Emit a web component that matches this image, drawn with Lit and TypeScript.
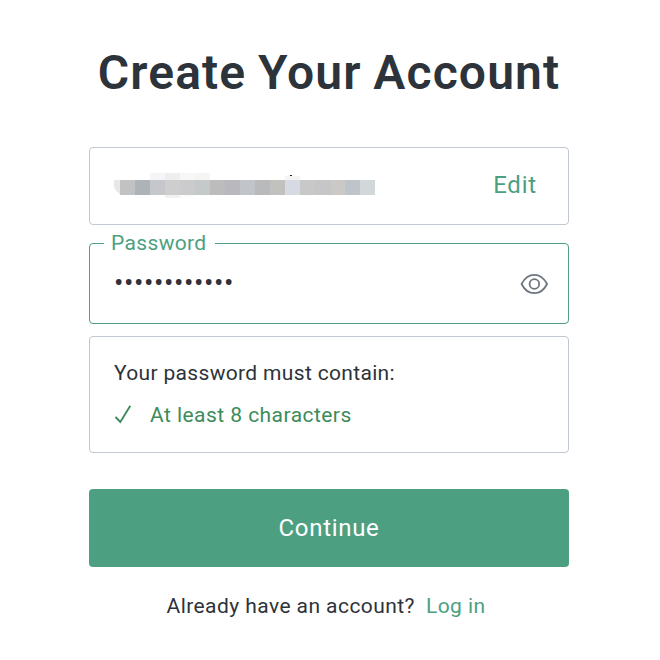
import { LitElement, html, css, svg } from "lit";
import { customElement } from "lit/decorators.js";

// [x, y, width, height, fill] blocks of the masked e-mail address
const MASK: [number, number, number, number, string][] = [
  [6, 7, 15, 15, "#c2c2c2"], [21, 7, 15, 15, "#adb3b6"], [36, 7, 15, 15, "#c6c7cc"],
  [51, 7, 15, 15, "#cecece"], [66, 7, 15, 15, "#cbcbcd"], [81, 7, 15, 15, "#c5c9c9"],
  [96, 7, 15, 15, "#bcbcbc"], [111, 7, 15, 15, "#b9b8be"], [126, 7, 15, 15, "#c1c5c9"],
  [141, 7, 15, 15, "#b9babc"], [156, 7, 15, 15, "#c1c1be"], [171, 7, 15, 15, "#d7dae3"],
  [186, 7, 15, 15, "#c8c8c8"], [201, 7, 15, 15, "#c6c6c9"], [216, 7, 15, 15, "#cbc9c8"],
  [231, 7, 15, 15, "#bec4c9"],
  [36, 0, 15, 7, "#f5f5f5"], [51, 0, 15, 7, "#eeeeee"], [66, 0, 15, 7, "#f6f7f7"],
  [81, 0, 15, 7, "#f5f5f4"], [51, 22, 15, 3, "#f2f2f3"], [66, 22, 15, 3, "#fcfcfc"],
  [171, 3, 15, 4, "#f4f4f4"], [176, 2, 2, 1, "#25243f"], [175, 2, 1, 1, "#f8dfae"],
];

@customElement("app-root")
export class AppRoot extends LitElement {
  static styles = css`
    :host {
      display: block;
      height: 660px;
      box-sizing: border-box;
      padding: 45px 91px 0 89px;
      background: #fff;
      color: #2d333a;
      font: 400 21px/28px Roboto, "Liberation Sans", sans-serif;
      white-space: nowrap;
      overflow: hidden;
    }
    .title {
      margin: 0 0 46px;
      font-size: 48px;
      line-height: 56px;
      font-weight: 600;
      text-align: center;
      letter-spacing: 1.15px;
      word-spacing: -1.5px;
    }
    .box {
      box-sizing: border-box;
      border: 1px solid #c2c8d0;
      border-radius: 4px;
    }
    .email {
      height: 78px;
      display: flex;
      justify-content: space-between;
      align-items: flex-start;
      padding: 25px 31px 0 24px;
    }
    .mask { display: block; }
    a { color: #4ca081; text-decoration: none; }
    .edit {
      font-size: 24px;
      line-height: 24px;
      letter-spacing: 0.8px;
    }
    .password {
      height: 81px;
      margin-top: 18px;
      border-color: #4ca081;
      position: relative;
      display: flex;
      justify-content: space-between;
      align-items: center;
      padding: 0 20px 0 24px;
    }
    .label {
      position: absolute;
      left: 14px;
      top: -15px;
      padding: 0 8px 0 7px;
      background: #fff;
      color: #4ca081;
      letter-spacing: 0.35px;
    }
    .dots { font-size: 28px; letter-spacing: 0.55px; padding-bottom: 2px; }
    .eye, .tick { display: block; fill: none; }
    .rules {
      height: 117px;
      margin-top: 12px;
      padding: 22px 24px 0;
    }
    .intro { letter-spacing: 0.33px; }
    .rule {
      display: flex;
      align-items: center;
      gap: 18px;
      margin-top: 14px;
      color: #3d8b5a;
      letter-spacing: 0.45px;
    }
    .continue {
      display: block;
      width: 100%;
      height: 78px;
      margin-top: 36px;
      padding: 0;
      border: 0;
      border-radius: 4px;
      background: #4ca081;
      color: #fff;
      font: 440 24px/28px Roboto, "Liberation Sans", sans-serif;
      letter-spacing: 0.7px;
    }
    .footer {
      display: flex;
      justify-content: center;
      gap: 11px;
      margin-top: 25px;
      padding-right: 6px;
      letter-spacing: 0.43px;
    }
  `;

  render() {
    return html`
      <h1 class="title">Create Your Account</h1>
      <div class="box email">
        <svg class="mask" width="261" height="25" viewBox="0 0 261 25" shape-rendering="crispEdges">
          <path d="M0 7h6v15L2 18L0 14z" fill="#e8e8e6" />
          <path d="M246 7h14l1 1v14h-15z" fill="#d2d7da" />
          ${MASK.map(([x, y, w, h, fill]) => svg`<rect x=${x} y=${y} width=${w} height=${h} fill=${fill} />`)}
        </svg>
        <a class="edit">Edit</a>
      </div>
      <div class="box password">
        <span class="label">Password</span>
        <span class="dots">••••••••••••</span>
        <svg class="eye" width="28" height="22" viewBox="0 0 28 22" stroke="#6e7780" stroke-width="1.8">
          <path d="M1.6 11C4.5 5 8.8 1.8 14.4 1.8S24 5 27.1 11C24 17 19.6 20.2 14.4 20.2S4.5 17 1.6 11z" stroke-linejoin="round" />
          <circle cx="14.4" cy="11" r="4.8" />
        </svg>
      </div>
      <div class="box rules">
        <div class="intro">Your password must contain:</div>
        <div class="rule">
          <svg class="tick" width="18" height="20" viewBox="0 0 18 20" stroke="#3d8b5a" stroke-width="1.9">
            <path d="M1.5 12L6.3 17L16.3 0.8" />
          </svg>
          <span>At least 8 characters</span>
        </div>
      </div>
      <button class="continue">Continue</button>
      <div class="footer"><span>Already have an account?</span><a>Log in</a></div>
    `;
  }
}
